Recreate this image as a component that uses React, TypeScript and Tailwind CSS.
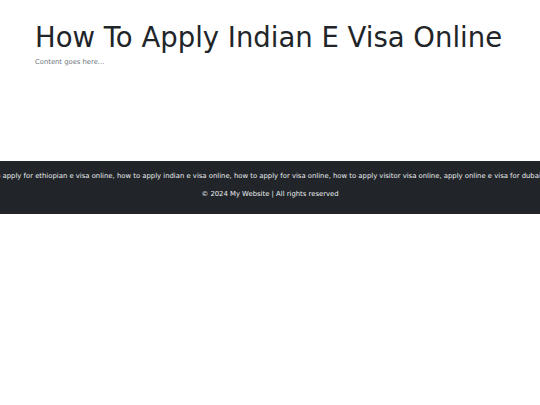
export default function App() {
  const keywords =
    "how to apply for ethiopian e visa online, how to apply indian e visa online, how to apply for visa online, how to apply visitor visa online, apply online e visa for dubai";

  return (
    <div className="min-h-[405px] bg-white font-['DejaVu_Sans',sans-serif] text-[#212529]">
      <main className="px-[35px] pt-[18px] h-[161px]">
        <h1 className="text-[27.5px] leading-[38px] font-normal">How To Apply Indian E Visa Online</h1>
        <p className="text-[6.8px] leading-[10px] text-[#6c757d] mt-[1px]">Content goes here...</p>
      </main>
      <footer className="bg-[#212529] text-[#e9ecef] h-[53px] pt-[10px] overflow-hidden">
        {/* keyword strip is wider than the page, so it spills off both sides */}
        <div className="flex justify-center whitespace-nowrap text-[6.85px] leading-[10px] pr-[22px]">
          <span>{keywords}</span>
        </div>
        <p className="text-center text-[6.85px] leading-[10px] mt-[7.5px]">© 2024 My Website | All rights reserved</p>
      </footer>
    </div>
  );
}
